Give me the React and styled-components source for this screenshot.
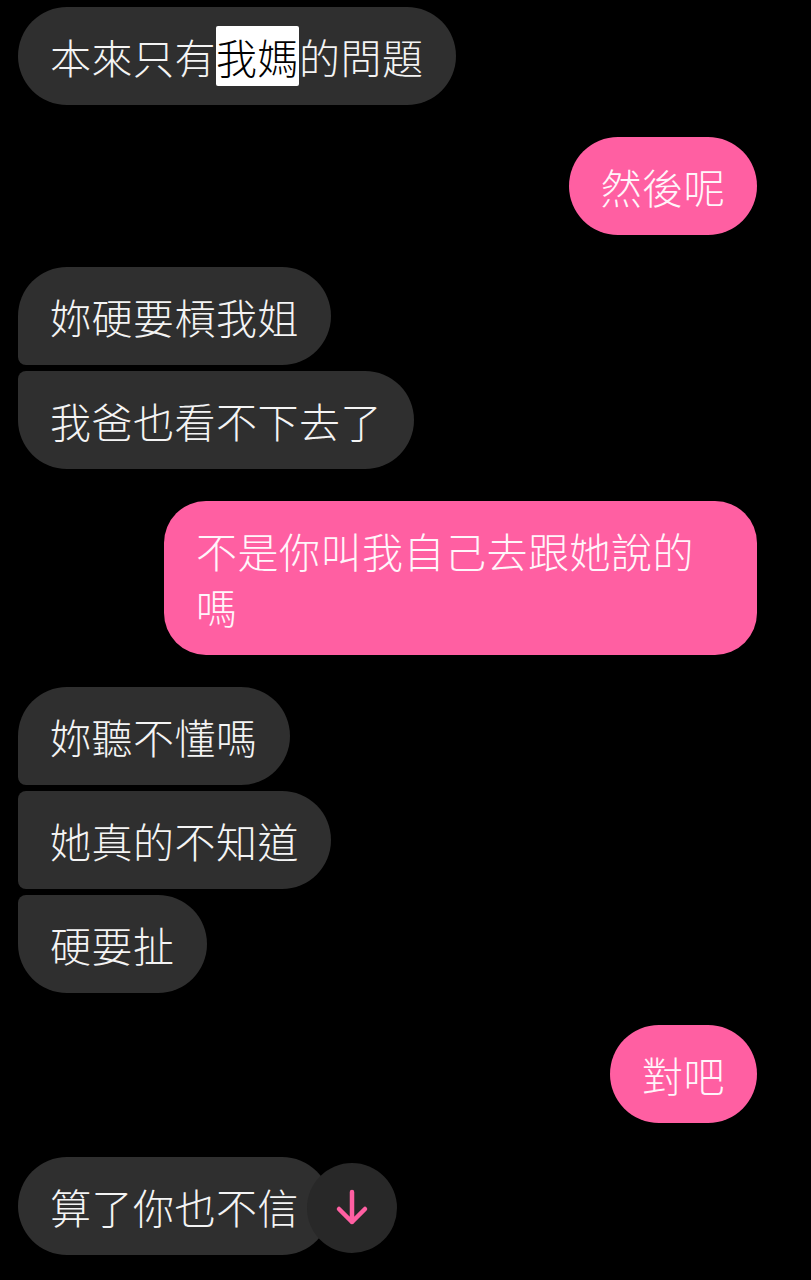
import React from "react";
import styled, { createGlobalStyle, css } from "styled-components";

const Global = createGlobalStyle`
  html, body { margin: 0; padding: 0; background: #000; }
  body { font-family: "Noto Sans CJK TC", "Noto Sans CJK SC", sans-serif; }
`;

const Screen = styled.div`
  width: 811px;
  height: 1280px;
  background: #000;
  box-sizing: border-box;
  padding: 7px 54px 0 18px;
  display: flex;
  flex-direction: column;
  gap: 32px;
  overflow: hidden;
`;

const Group = styled.div`
  display: flex;
  flex-direction: column;
  gap: 6px;
  align-items: ${(p) => (p.$mine ? "flex-end" : "flex-start")};
  margin-top: ${(p) => p.$offset || 0}px;
`;

const Row = styled.div`
  position: relative;
  display: flex;
`;

const radiusFor = (pos) => {
  switch (pos) {
    case "first":
      return "49px 49px 49px 8px";
    case "middle":
      return "8px 49px 49px 8px";
    case "last":
      return "8px 49px 49px 49px";
    default:
      return "49px";
  }
};

const Bubble = styled.div`
  box-sizing: border-box;
  max-width: 593px;
  padding: 21px 32px;
  font-size: 41px;
  line-height: 56px;
  font-weight: 300;
  letter-spacing: 0.5px;
  color: #f4f4f4;
  background: #2f2f2f;
  border-radius: ${(p) => radiusFor(p.$pos)};
  ${(p) =>
    p.$mine &&
    css`
      background: #ff5fa2;
      color: #fff5fa;
      border-radius: ${p.$multi ? "42px" : "49px"};
    `}
`;

const Highlight = styled.span`
  background: #fff;
  color: #000;
  border-radius: 2px;
`;

const ScrollButton = styled.div`
  position: absolute;
  left: 289px;
  top: 6px;
  width: 90px;
  height: 90px;
  border-radius: 50%;
  background: #282828;
  display: flex;
  align-items: center;
  justify-content: center;
`;

const ArrowDown = () => (
  <svg width="36" height="40" viewBox="0 0 36 40" fill="none">
    <path
      d="M18 4 V34 M5 21 L18 34 L31 21"
      stroke="#ff5fa2"
      strokeWidth="4.5"
      strokeLinecap="round"
      strokeLinejoin="round"
    />
  </svg>
);

export default function App() {
  return (
    <>
      <Global />
      <Screen>
        <Group>
          <Bubble>
            本來只有<Highlight>我媽</Highlight>的問題
          </Bubble>
        </Group>
        <Group $mine>
          <Bubble $mine>然後呢</Bubble>
        </Group>
        <Group>
          <Bubble $pos="first">妳硬要槓我姐</Bubble>
          <Bubble $pos="last">我爸也看不下去了</Bubble>
        </Group>
        <Group $mine>
          <Bubble $mine $multi>
            不是你叫我自己去跟她說的嗎
          </Bubble>
        </Group>
        <Group>
          <Bubble $pos="first">妳聽不懂嗎</Bubble>
          <Bubble $pos="middle">她真的不知道</Bubble>
          <Bubble $pos="last">硬要扯</Bubble>
        </Group>
        <Group $mine>
          <Bubble $mine>對吧</Bubble>
        </Group>
        <Group $offset={2}>
          <Row>
            <Bubble>算了你也不信</Bubble>
            <ScrollButton>
              <ArrowDown />
            </ScrollButton>
          </Row>
        </Group>
      </Screen>
    </>
  );
}
